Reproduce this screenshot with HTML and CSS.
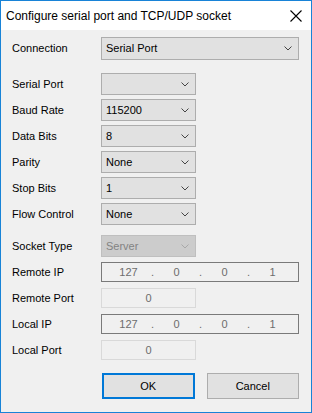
FILE: index.html
```html
<!DOCTYPE html>
<html lang="en">
<head>
  <meta charset="UTF-8" />
  <title>Configure serial port and TCP/UDP socket</title>
  <link rel="stylesheet" href="styles.css">
</head>
<body>

<div class="dialog">
  <div class="titlebar">
    <span class="title">Configure serial port and TCP/UDP socket</span>
    <svg class="close" width="12" height="12" viewBox="0 0 12 12">
      <path d="M0.5 0.5 L11.5 11.5 M11.5 0.5 L0.5 11.5" stroke="#000" stroke-width="1.1" fill="none"/>
    </svg>
  </div>

  <div class="content">
    <div class="row">
      <span class="label">Connection</span>
      <div class="combo wide">Serial Port<svg class="chev" viewBox="0 0 8 5"><path d="M0.5 0.5 L4 4 L7.5 0.5" stroke="#444" fill="none"/></svg></div>
    </div>

    <div class="group first">
      <div class="row">
        <span class="label">Serial Port</span>
        <div class="combo"><svg class="chev" viewBox="0 0 8 5"><path d="M0.5 0.5 L4 4 L7.5 0.5" stroke="#444" fill="none"/></svg></div>
      </div>
      <div class="row">
        <span class="label">Baud Rate</span>
        <div class="combo">115200<svg class="chev" viewBox="0 0 8 5"><path d="M0.5 0.5 L4 4 L7.5 0.5" stroke="#444" fill="none"/></svg></div>
      </div>
      <div class="row">
        <span class="label">Data Bits</span>
        <div class="combo">8<svg class="chev" viewBox="0 0 8 5"><path d="M0.5 0.5 L4 4 L7.5 0.5" stroke="#444" fill="none"/></svg></div>
      </div>
      <div class="row">
        <span class="label">Parity</span>
        <div class="combo">None<svg class="chev" viewBox="0 0 8 5"><path d="M0.5 0.5 L4 4 L7.5 0.5" stroke="#444" fill="none"/></svg></div>
      </div>
      <div class="row">
        <span class="label">Stop Bits</span>
        <div class="combo">1<svg class="chev" viewBox="0 0 8 5"><path d="M0.5 0.5 L4 4 L7.5 0.5" stroke="#444" fill="none"/></svg></div>
      </div>
      <div class="row">
        <span class="label">Flow Control</span>
        <div class="combo">None<svg class="chev" viewBox="0 0 8 5"><path d="M0.5 0.5 L4 4 L7.5 0.5" stroke="#444" fill="none"/></svg></div>
      </div>
    </div>

    <div class="group second">
      <div class="row">
        <span class="label">Socket Type</span>
        <div class="combo disabled">Server<svg class="chev" viewBox="0 0 8 5"><path d="M0.5 0.5 L4 4 L7.5 0.5" stroke="#a8a8a8" fill="none"/></svg></div>
      </div>
      <div class="row">
        <span class="label">Remote IP</span>
        <div class="ipbox">
          <span class="seg">127</span><span class="dot">.</span><span class="seg">0</span><span class="dot">.</span><span class="seg">0</span><span class="dot">.</span><span class="seg">1</span>
        </div>
      </div>
      <div class="row">
        <span class="label">Remote Port</span>
        <div class="port">0</div>
      </div>
      <div class="row">
        <span class="label">Local IP</span>
        <div class="ipbox">
          <span class="seg">127</span><span class="dot">.</span><span class="seg">0</span><span class="dot">.</span><span class="seg">0</span><span class="dot">.</span><span class="seg">1</span>
        </div>
      </div>
      <div class="row">
        <span class="label">Local Port</span>
        <div class="port">0</div>
      </div>
    </div>

    <div class="buttons">
      <button class="btn default">OK</button>
      <button class="btn">Cancel</button>
    </div>
  </div>
</div>

</body>
</html>
```

FILE: styles.css
```css
html, body {
  margin: 0;
  padding: 0;
  background: #fff;
}

.dialog {
  width: 312px;
  height: 413px;
  box-sizing: border-box;
  border: 1px solid #1883d7;
  background: #f0f0f0;
  font-family: 'Liberation Sans', Arial, sans-serif;
  font-size: 11px;
  color: #000;
  display: flex;
  flex-direction: column;
}

/* Заголовок окна */
.titlebar {
  height: 29px;
  background: #fff;
  display: flex;
  align-items: center;
  justify-content: space-between;
  padding: 0 9px 0 5px;
}

.title {
  font-size: 12px;
  margin-top: 1px;
}

.close {
  display: block;
}

.content {
  padding: 7px 12px 0 11px;
}

.row {
  display: flex;
  align-items: center;
  height: 22px;
}

.label {
  width: 89px;
  flex: none;
}

.group {
  display: flex;
  flex-direction: column;
  gap: 4px;
}

.group.first {
  margin-top: 14px;
}

.group.second {
  margin-top: 10px;
}

/* Выпадающие списки */
.combo {
  position: relative;
  box-sizing: border-box;
  width: 95px;
  height: 22px;
  line-height: 20px;
  padding-left: 4px;
  background: #e1e1e1;
  border: 1px solid #adadad;
}

.combo.wide {
  width: 198px;
  height: 23px;
  line-height: 21px;
}

.combo.disabled {
  background: #cccccc;
  border-color: #bfbfbf;
  color: #838383;
}

.chev {
  position: absolute;
  right: 6px;
  top: 50%;
  width: 8px;
  height: 5px;
  margin-top: -2px;
}

/* Поля IP и порта */
.ipbox {
  box-sizing: border-box;
  width: 198px;
  height: 20px;
  border: 1px solid #7a7a7a;
  background: #f0f0f0;
  color: #6d6d6d;
  display: flex;
  align-items: center;
  padding-left: 7px;
}

.seg {
  width: 39px;
  text-align: center;
}

.dot {
  width: 9px;
  text-align: center;
}

.port {
  box-sizing: border-box;
  width: 95px;
  height: 20px;
  line-height: 18px;
  border: 1px solid #d9d9d9;
  background: #f0f0f0;
  color: #6d6d6d;
  text-align: center;
}

/* Кнопки */
.buttons {
  display: flex;
  gap: 12px;
  margin-top: 12px;
  padding-left: 90px;
}

.btn {
  box-sizing: border-box;
  width: 93px;
  height: 26px;
  background: #e1e1e1;
  border: 1px solid #adadad;
  font-family: 'Liberation Sans', Arial, sans-serif;
  font-size: 11px;
  color: #000;
  padding: 0;
}

.btn.default {
  border: 2px solid #0078d7;
}
```
